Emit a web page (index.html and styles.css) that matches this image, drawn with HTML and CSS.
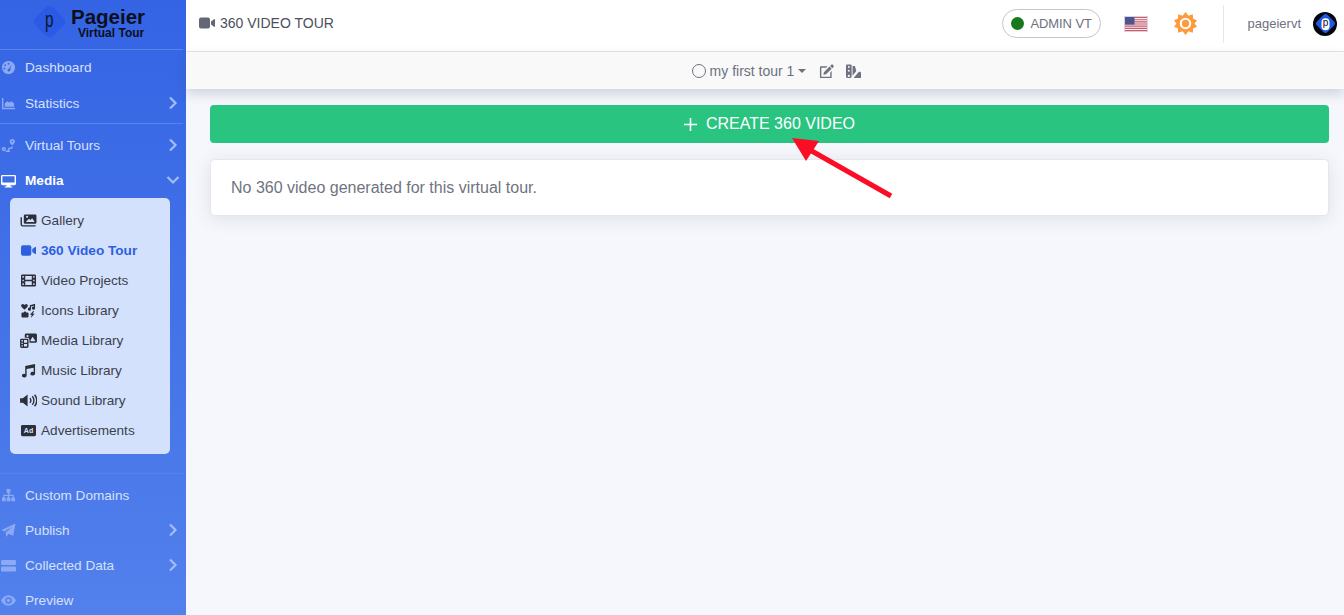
FILE: index.html
```html
<!DOCTYPE html>
<html lang="en">
<head>
    <meta charset="UTF-8">
    <meta name="viewport" content="width=device-width, initial-scale=1.0">
    <title>360 Video Tour</title>
    <link rel="stylesheet" href="styles.css">
</head>
<body>
    <div class="app">
        <!-- Sidebar -->
        <aside class="sidebar">
            <div class="brand">
                <div class="brand-mark"><span>p</span></div>
                <div class="brand-text">
                    <div class="brand-name">Pageier</div>
                    <div class="brand-sub">Virtual Tour</div>
                </div>
            </div>

            <a class="nav-item nav-first">
                <svg class="nav-icon" viewBox="0 0 16 16"><path fill-rule="evenodd" d="M8 1a7 7 0 1 1 0 14A7 7 0 0 1 8 1zM8 3a1 1 0 1 0 0 2 1 1 0 0 0 0-2zM4.500 4.500a1 1 0 1 0 0 2 1 1 0 0 0 0-2zM3.500 8a1 1 0 1 0 0 2 1 1 0 0 0 0-2zM11.500 4.500L8.700 9a1.600 1.600 0 1 0 1.200.7z"/></svg>
                <span>Dashboard</span>
            </a>
            <a class="nav-item">
                <svg class="nav-icon" viewBox="0 0 16 16"><path d="M1 2h1.500v10.500H15V14H1z"/><path d="M4 11.500V8l2.500-2.500L9 7l2-1.500 3 2.500v3.500z"/></svg>
                <span>Statistics</span>
                <svg class="chev" viewBox="0 0 10 14"><path d="M2 1.500L7.500 7 2 12.500"/></svg>
            </a>
            <hr class="nav-line nav-line-a">
            <a class="nav-item">
                <svg class="nav-icon" viewBox="0 0 16 16"><path fill-rule="evenodd" d="M12 1a2.800 2.800 0 0 1 2.800 2.800C14.800 5.500 12 8 12 8S9.200 5.500 9.200 3.800A2.800 2.800 0 0 1 12 1zM12 3a.8.8 0 1 0 0 1.600A.8.8 0 0 0 12 3z"/><path fill-rule="evenodd" d="M3 9.500a2.300 2.300 0 1 1 0 4.600 2.300 2.300 0 0 1 0-4.600zM3 11.200a.6.6 0 1 0 0 1.200.6.6 0 0 0 0-1.200z"/><path class="thin" d="M12 9v.5a1.500 1.500 0 0 1-1.500 1.500H9.500a1.500 1.500 0 0 0 0 3.200H5"/></svg>
                <span>Virtual Tours</span>
                <svg class="chev" viewBox="0 0 10 14"><path d="M2 1.500L7.500 7 2 12.500"/></svg>
            </a>
            <a class="nav-item nav-open">
                <svg class="nav-icon" viewBox="0 0 16 16"><path fill-rule="evenodd" d="M1.500 2h13A1.500 1.500 0 0 1 16 3.500v8a1.500 1.500 0 0 1-1.500 1.500H10l.4 1.300h1.600V15.500H4v-1.200h1.600L6 13H1.500A1.500 1.500 0 0 1 0 11.500v-8A1.500 1.500 0 0 1 1.500 2zM1.500 3.500v6.500h13V3.500z"/></svg>
                <span>Media</span>
                <svg class="chev chev-down" viewBox="0 0 14 10"><path d="M1.500 2L7 7.500 12.500 2"/></svg>
            </a>

            <div class="submenu">
                <a class="sub-item">
                    <svg class="sub-icon sub-icon-wide" viewBox="0 0 18 16"><path fill-rule="evenodd" d="M5.500 1.500H16A1.500 1.500 0 0 1 17.500 3v7a1.500 1.500 0 0 1-1.500 1.500H5.500A1.500 1.500 0 0 1 4 10V3a1.500 1.500 0 0 1 1.500-1.500zM6 9.500h9.500L13 5.500 11 7.500 9.500 6zM7.500 3a1.100 1.100 0 1 0 0 2.200 1.100 1.100 0 0 0 0-2.200z"/><path d="M.5 4.500H2V12a1 1 0 0 0 1 1h13.500v1.500H3A2.500 2.500 0 0 1 .5 12z"/></svg>
                    <span>Gallery</span>
                </a>
                <a class="sub-item sub-active">
                    <svg class="sub-icon" viewBox="0 0 16 16"><rect x="0" y="2.500" width="11" height="11" rx="2"/><path d="M12 6.500l3-2.300c.4-.3 1 0 1 .5v6.600c0 .5-.6.8-1 .5l-3-2.300z"/></svg>
                    <span>360 Video Tour</span>
                </a>
                <a class="sub-item">
                    <svg class="sub-icon" viewBox="0 0 16 16"><path fill-rule="evenodd" d="M1.500 1.500h13A1.500 1.500 0 0 1 16 3v10a1.500 1.500 0 0 1-1.500 1.500h-13A1.500 1.500 0 0 1 0 13V3a1.500 1.500 0 0 1 1.500-1.500zM1.500 3.200v1.800H3V3.200zM1.500 7.100v1.800H3V7.100zM1.500 11v1.800H3V11zM13 3.200v1.800h1.500V3.200zM13 7.100v1.800h1.500V7.100zM13 11v1.800h1.500V11zM4.500 3.200v4h7v-4zM4.500 8.800v4h7v-4z"/></svg>
                    <span>Video Projects</span>
                </a>
                <a class="sub-item">
                    <svg class="sub-icon" viewBox="0 0 16 16"><path d="M3.700 7.200L.6 4.200C-.6 2.800.8.500 2.600 1.300l1.100.7 1.100-.7c1.800-.8 3.200 1.500 2 2.900z"/><path d="M15 .8v4.700a1.700 1.700 0 1 1-1.300-1.600V3l-3 .8v2.800a1.700 1.700 0 1 1-1.300-1.600V2.500z"/><path d="M1.500 10H3l.5-1h1.500l.5 1h1.500A1 1 0 0 1 8 11v3.500a1 1 0 0 1-1 1H1.500a1 1 0 0 1-1-1V11a1 1 0 0 1 1-1z"/><path d="M13 8.500l-3.500 4h2l-1 3.500 4-4.500h-2l1.500-3z"/></svg>
                    <span>Icons Library</span>
                </a>
                <a class="sub-item">
                    <svg class="sub-icon sub-icon-wide" viewBox="0 0 18 16"><path fill-rule="evenodd" d="M6.500 .5H16.500A1.500 1.500 0 0 1 18 2v7a1.500 1.500 0 0 1-1.500 1.500H10V7.500A2.500 2.500 0 0 0 7.500 5H5V2A1.500 1.500 0 0 1 6.500 .5zM8 2.200a1.100 1.100 0 1 0 0 2.200 1.100 1.100 0 0 0 0-2.200zM11 8.800h5.500L13.500 4l-2 3z"/><path fill-rule="evenodd" d="M1.500 6H7.500A1.500 1.500 0 0 1 9 7.500v7A1.500 1.500 0 0 1 7.500 16H1.500A1.500 1.500 0 0 1 0 14.500v-7A1.500 1.500 0 0 1 1.500 6zM1.500 7.500V9H3V7.500zM1.500 10.300v1.400H3v-1.400zM1.500 13v1.500H3V13zM4.200 7.500v2.800H7.500V7.500zM4.200 11.700v2.800H7.500v-2.800z"/></svg>
                    <span>Media Library</span>
                </a>
                <a class="sub-item">
                    <svg class="sub-icon" viewBox="0 0 16 16"><path d="M15 1v10.500a2.500 2 0 1 1-1.500-1.900V5L6 6.500v7a2.500 2 0 1 1-1.500-1.900V3.200z"/></svg>
                    <span>Music Library</span>
                </a>
                <a class="sub-item">
                    <svg class="sub-icon sub-icon-wide" viewBox="0 0 18 16"><path d="M0 5.500h3L8 1.500v13l-5-4H0z"/><path class="thin" d="M10.500 5.500a3.500 3.500 0 0 1 0 5M13 3.500a6.500 6.500 0 0 1 0 9M15.500 1.800a9.500 9.500 0 0 1 0 12.400"/></svg>
                    <span>Sound Library</span>
                </a>
                <a class="sub-item">
                    <svg class="sub-icon" viewBox="0 0 16 16"><rect y="2" width="16" height="12" rx="1.500"/><text class="ad-text" x="8" y="11" text-anchor="middle">Ad</text></svg>
                    <span>Advertisements</span>
                </a>
            </div>

            <hr class="nav-line nav-line-b">
            <a class="nav-item">
                <svg class="nav-icon" viewBox="0 0 16 16"><path d="M6 1h4v4H8.700v2.200H13.500v2.800H15v4h-4v-4h1.300V8.500H8.700V10H10v4H6v-4h1.300V8.500H3.700V10H5v4H1v-4h1.500V7.200h4.800V5H6z"/></svg>
                <span>Custom Domains</span>
            </a>
            <a class="nav-item">
                <svg class="nav-icon" viewBox="0 0 16 16"><path d="M15.500.5L13 13.500l-5-2-2.500 3.500-.5-5 7-6-8.500 5L.5 7.500z"/></svg>
                <span>Publish</span>
                <svg class="chev" viewBox="0 0 10 14"><path d="M2 1.500L7.500 7 2 12.500"/></svg>
            </a>
            <a class="nav-item">
                <svg class="nav-icon" viewBox="0 0 16 16"><rect y="2" width="16" height="5.500" rx="1.500"/><rect y="9" width="16" height="5.500" rx="1.500"/></svg>
                <span>Collected Data</span>
                <svg class="chev" viewBox="0 0 10 14"><path d="M2 1.500L7.500 7 2 12.500"/></svg>
            </a>
            <a class="nav-item">
                <svg class="nav-icon" viewBox="0 0 16 16"><path fill-rule="evenodd" d="M8 2.500c3.600 0 6.500 2.500 8 5.500-1.500 3-4.400 5.500-8 5.500S1.500 11 0 8c1.500-3 4.400-5.500 8-5.500zM8 4.500a3.500 3.500 0 1 0 0 7 3.500 3.500 0 0 0 0-7zM8 6.200a1.800 1.800 0 1 1 0 3.600 1.800 1.800 0 0 1 0-3.600z"/></svg>
                <span>Preview</span>
            </a>
        </aside>

        <div class="content">
            <!-- Top bar -->
            <header class="topbar">
                <div class="page-title">
                    <svg class="title-icon" viewBox="0 0 16 16"><rect x="0" y="2.500" width="11" height="11" rx="2"/><path d="M12 6.500l3-2.300c.4-.3 1 0 1 .5v6.600c0 .5-.6.8-1 .5l-3-2.300z"/></svg>
                    <span>360 VIDEO TOUR</span>
                </div>
                <div class="top-right">
                    <div class="role-pill"><i class="role-dot"></i>ADMIN VT</div>
                    <svg class="flag" viewBox="0 0 22 14">
                        <rect width="22" height="14" fill="#f3f1f4"/>
                        <path d="M0 0h22v1.100H0zM0 2.200h22v1.100H0zM0 4.300h22v1.100H0zM0 6.500h22v1.100H0zM0 8.600h22v1.100H0zM0 10.800h22v1.100H0zM0 12.900h22V14H0z" fill="#d0596b"/>
                        <rect width="9.500" height="7.600" fill="#4d5590"/>
                    </svg>
                    <svg class="sun" viewBox="0 0 24 24">
                        <path fill-rule="evenodd" d="M12 0l3 3.900 4.600-1.500.4 4.600 4 1.500L21.500 12l2.500 3.500-4 1.500-.4 4.600-4.600-1.500L12 24l-3-3.900-4.600 1.500L4 17l-4-1.500L2.500 12 0 8.500 4 7l.4-4.600L9 3.900zM12 6a6 6 0 1 0 0 12 6 6 0 0 0 0-12z"/>
                        <circle cx="12" cy="12" r="3.800"/>
                    </svg>
                    <div class="top-sep"></div>
                    <span class="user-name">pageiervt</span>
                    <div class="avatar"><div class="avatar-mark"><span>p</span></div></div>
                </div>
            </header>

            <!-- Tour selector -->
            <div class="subbar">
                <span class="tour-radio"></span>
                <span class="tour-name">my first tour 1</span>
                <span class="caret"></span>
                <svg class="sub-tool" viewBox="0 0 16 16"><path d="M11.200 2.700l2.300 2.300-6 6-2.800.5.500-2.800zM14.800.9l.6.6c.5.5.5 1.200 0 1.700l-1.200 1.200L11.900 2l1.200-1.100c.5-.5 1.200-.5 1.700 0z"/><path d="M2 2.500h7L7.700 4H2.500v9.500h9.500V9l1.500-1.500V14a1 1 0 0 1-1 1H2a1 1 0 0 1-1-1V3.500a1 1 0 0 1 1-1z"/></svg>
                <svg class="sub-tool" viewBox="0 0 16 16"><path fill-rule="evenodd" d="M1 .5h4a1 1 0 0 1 1 1V13a2 2 0 0 1-2 2H2a2 2 0 0 1-2-2V1.500a1 1 0 0 1 1-1zM3 2.200a1 1 0 1 0 0 2 1 1 0 0 0 0-2zM3 6.200a1 1 0 1 0 0 2 1 1 0 0 0 0-2zM3 11.500a1.200 1.200 0 1 0 0 2.400 1.200 1.200 0 0 0 0-2.400z"/><path d="M7 2h2.500l1.500 5.500-4 5z"/><path d="M8 15l6-7 2 1v6z"/></svg>
            </div>

            <main class="main">
                <button class="create-btn">
                    <svg class="plus" viewBox="0 0 13 13"><path d="M6.500 0v13M0 6.500h13"/></svg>
                    CREATE 360 VIDEO
                </button>
                <div class="card">No 360 video generated for this virtual tour.</div>
            </main>
        </div>
    </div>

    <!-- Annotation arrow drawn over the screenshot -->
    <svg class="arrow" viewBox="0 0 1344 615">
        <path d="M792 138L819 141L806 161z" fill="#fb0d25"/>
        <path d="M810 150L891 196" stroke="#fb0d25" stroke-width="5" fill="none"/>
    </svg>
</body>
</html>
```

FILE: styles.css
```css
* {
    box-sizing: border-box;
}
html, body {
    margin: 0;
    padding: 0;
    height: 100%;
    overflow: hidden;
}
body {
    font-family: "Liberation Sans", Arial, sans-serif;
    background-color: #f5f7fc;
    color: #6e7180;
}
.app {
    display: flex;
    height: 615px;
}
.thin {
    fill: none;
    stroke: currentColor;
    stroke-width: 1.5;
}

/* Sidebar */
.sidebar {
    width: 186px;
    flex-shrink: 0;
    height: 615px;
    overflow: hidden;
    background: linear-gradient(180deg, #3464e4 0%, #5280ec 100%);
    color: #d6e1fb;
    font-size: 13.600px;
}
.brand {
    height: 50px;
    margin-right: 3px;
    border-bottom: 1px solid #5a82ec;
    display: flex;
    padding-left: 37px;
    gap: 9px;
}
.brand-mark {
    width: 25px;
    height: 25px;
    margin-top: 9px;
    border-radius: 5px;
    background: #2a5ae6;
    transform: rotate(45deg);
    display: flex;
    align-items: center;
    justify-content: center;
    flex-shrink: 0;
}
.brand-mark span {
    transform: rotate(-45deg) scaleX(0.7);
    color: #10172c;
    font-size: 22px;
    line-height: 19px;
    margin: -3px 0 0 -3px;
}
.brand-text {
    color: #0c0f1c;
    font-weight: bold;
}
.brand-name {
    font-size: 20.500px;
    line-height: 24px;
    margin-top: 5px;
}
.brand-sub {
    font-size: 12px;
    line-height: 12px;
    margin: -2px 0 0 7px;
}
.nav-item {
    height: 35px;
    display: flex;
    align-items: center;
    padding: 1px 8px 0 1px;
}
.nav-first {
    padding-top: 0;
}
.nav-icon {
    width: 15px;
    height: 15px;
    margin-right: 9px;
    fill: #8caaf3;
    color: #8caaf3;
    flex-shrink: 0;
}
.chev {
    width: 10px;
    height: 14px;
    margin-left: auto;
    fill: none;
    stroke: #a3bcf6;
    stroke-width: 2.200;
}
.chev-down {
    width: 14px;
    height: 10px;
    margin: 0 -2px 0 auto;
}
.nav-open {
    color: #fff;
    font-weight: bold;
    margin-bottom: 1px;
}
.nav-open .nav-icon {
    fill: #fff;
}
.nav-line {
    border: 0;
    height: 1px;
    background: #5a82ec;
    margin: 0 3px 0 0;
}
.nav-line-a {
    margin-top: 3px;
    margin-bottom: 3px;
}
.nav-line-b {
    margin-top: 19px;
    margin-bottom: 3px;
}
.submenu {
    width: 160px;
    height: 256px;
    margin-left: 10px;
    padding: 7px 0 0 11px;
    background: #d3e1fd;
    border-radius: 5px;
}
.sub-item {
    height: 30px;
    display: flex;
    align-items: center;
    color: #3c3f4c;
}
.sub-icon {
    width: 15px;
    height: 15px;
    margin-right: 5px;
    fill: #2c2f3a;
    color: #2c2f3a;
    flex-shrink: 0;
}
.sub-icon-wide {
    width: 17px;
    margin-left: -1px;
    margin-right: 4px;
}
.ad-text {
    fill: #d3e1fd;
    font-size: 7.500px;
    font-weight: bold;
}
.sub-active {
    color: #2d5fe0;
    font-weight: bold;
}
.sub-active .sub-icon {
    fill: #2d5fe0;
}

/* Top bar */
.content {
    flex: 1;
    min-width: 0;
}
.topbar {
    height: 52px;
    background: #fff;
    border-bottom: 1px solid #e3e4ec;
    display: flex;
    align-items: center;
    padding: 0 7px 4px 13px;
}
.page-title {
    display: flex;
    align-items: center;
    font-size: 14px;
    color: #4c4f5c;
    margin-bottom: 2px;
}
.title-icon {
    width: 16px;
    height: 16px;
    margin-right: 5px;
    fill: #636675;
}
.top-right {
    margin-left: auto;
    display: flex;
    align-items: center;
}
.role-pill {
    width: 99px;
    height: 29px;
    border: 1px solid #c4c5cc;
    border-radius: 15px;
    display: flex;
    align-items: center;
    padding-left: 8px;
    font-size: 13px;
    letter-spacing: -0.1px;
    color: #6e7180;
    margin-right: 24px;
}
.role-dot {
    width: 13px;
    height: 13px;
    border-radius: 50%;
    background: #167a1c;
    margin-right: 7px;
}
.flag {
    width: 22px;
    height: 14px;
    margin-right: 27px;
    outline: 1px solid #d5d3dc;
}
.sun {
    width: 23px;
    height: 23px;
    margin-right: 26px;
    fill: #fd9a3c;
}
.top-sep {
    width: 1px;
    height: 38px;
    background: #e6e7ec;
    margin-right: 24px;
}
.user-name {
    font-size: 13px;
    color: #6e7180;
    margin-right: 12px;
}
.avatar {
    width: 24px;
    height: 24px;
    border-radius: 50%;
    background: #05060c;
    display: flex;
    align-items: center;
    justify-content: center;
}
.avatar-mark {
    width: 15px;
    height: 15px;
    border-radius: 3px;
    background: #2058e4;
    transform: rotate(45deg);
    display: flex;
    align-items: center;
    justify-content: center;
}
.avatar-mark span {
    transform: rotate(-45deg);
    width: 8px;
    height: 12px;
    border-radius: 4px;
    background: #fff;
    color: #05060c;
    font-size: 10px;
    line-height: 10px;
    text-align: center;
}

/* Tour selector */
.subbar {
    position: relative;
    height: 37px;
    background: #f9f9f9;
    box-shadow: 0 5px 12px rgba(60, 64, 90, 0.2);
    display: flex;
    align-items: center;
    justify-content: center;
    font-size: 14px;
    color: #6e7180;
    padding-top: 1px;
    padding-left: 23px;
}
.tour-radio {
    width: 14px;
    height: 14px;
    border: 1.500px solid #6e7180;
    border-radius: 50%;
    margin-right: 4px;
}
.caret {
    width: 0;
    height: 0;
    margin-left: 4px;
    margin-right: 13px;
    border-left: 4px solid transparent;
    border-right: 4px solid transparent;
    border-top: 4px solid #6e7180;
}
.sub-tool {
    width: 15px;
    height: 15px;
    margin-right: 12px;
    fill: #6e7180;
}
.sub-tool:last-child {
    margin-right: 0;
}

/* Main */
.main {
    padding: 16px 15px 0 24px;
}
.create-btn {
    display: flex;
    align-items: center;
    justify-content: center;
    width: 100%;
    height: 38px;
    background: #2ac481;
    color: #fff;
    border: none;
    border-radius: 4px;
    font-family: inherit;
    font-size: 16px;
    cursor: pointer;
    padding: 0;
}
.plus {
    width: 13px;
    height: 13px;
    margin-right: 9px;
    stroke: #fff;
    stroke-width: 1.600;
    fill: none;
}
.card {
    height: 57px;
    margin-top: 16px;
    padding: 19px 20px;
    background: #fff;
    border: 1px solid #e6e7ee;
    border-radius: 5px;
    box-shadow: 0 3px 18px rgba(60, 64, 90, 0.12);
    font-size: 16px;
    line-height: 17px;
    color: #70737f;
}

/* Annotation */
.arrow {
    position: absolute;
    left: 0;
    top: 0;
    width: 1344px;
    height: 615px;
    pointer-events: none;
}
```
